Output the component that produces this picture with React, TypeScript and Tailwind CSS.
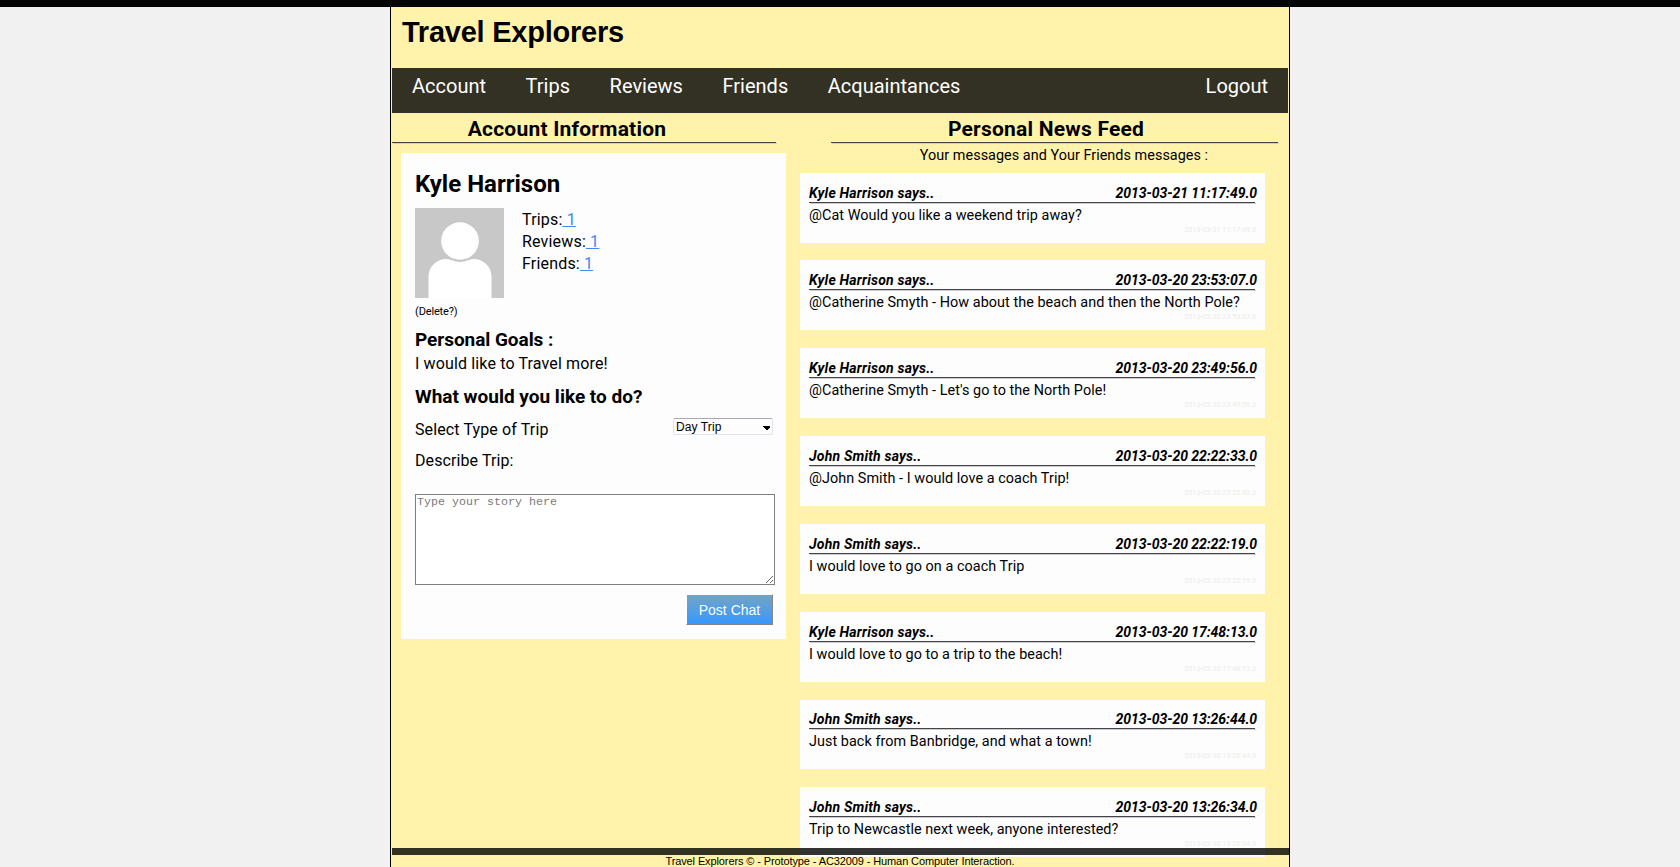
type Message = { author: string; date: string; text: string };

const MESSAGES: Message[] = [
  { author: 'Kyle Harrison', date: '2013-03-21 11:17:49.0', text: '@Cat Would you like a weekend trip away?' },
  { author: 'Kyle Harrison', date: '2013-03-20 23:53:07.0', text: '@Catherine Smyth - How about the beach and then the North Pole?' },
  { author: 'Kyle Harrison', date: '2013-03-20 23:49:56.0', text: "@Catherine Smyth - Let's go to the North Pole!" },
  { author: 'John Smith', date: '2013-03-20 22:22:33.0', text: '@John Smith - I would love a coach Trip!' },
  { author: 'John Smith', date: '2013-03-20 22:22:19.0', text: 'I would love to go on a coach Trip' },
  { author: 'Kyle Harrison', date: '2013-03-20 17:48:13.0', text: 'I would love to go to a trip to the beach!' },
  { author: 'John Smith', date: '2013-03-20 13:26:44.0', text: 'Just back from Banbridge, and what a town!' },
  { author: 'John Smith', date: '2013-03-20 13:26:34.0', text: 'Trip to Newcastle next week, anyone interested?' },
];

const NAV = ['Account', 'Trips', 'Reviews', 'Friends', 'Acquaintances'];
const STATS = ['Trips:', 'Reviews:', 'Friends:'];

function Rule({ className }: { className: string }) {
  return <div className={`h-px bg-[#444448] shadow-[1px_1px_0_#ccccd0] ${className}`} />;
}

function Avatar() {
  return (
    <svg width="89" height="90" viewBox="0 0 89 90" className="block">
      <rect width="89" height="90" fill="#c8c8c8" />
      <path d="M13.5 90V69C13.5 58 22 51 31.500 51C36 51 39 54 45 54C51 54 54 51 58.500 51C68 51 76.500 58 76.500 69V90Z" fill="#fff" />
      <circle cx="45" cy="33" r="20.300" fill="#c8c8c8" />
      <circle cx="45" cy="33" r="18.800" fill="#fff" />
    </svg>
  );
}

function AccountPanel() {
  return (
    <section className="w-[408px] shrink-0">
      <h2 className="mt-1 w-[350px] text-center text-[21px] leading-6 font-bold tracking-[0.22px]">Account Information</h2>
      <Rule className="mt-px w-[384px]" />
      <div className="mt-2.5 ml-[9px] h-[486px] w-[385px] bg-[#fdfdfd] pt-[17px] pl-[14px]">
        <h3 className="text-2xl leading-7 font-bold">Kyle Harrison</h3>
        <div className="mt-2.5 flex gap-[18px]">
          <Avatar />
          <div className="mt-px flex flex-col gap-px text-base leading-[21px] tracking-[0.18px]">
            {STATS.map((s) => (
              <div key={s}>
                {s}
                <a className="whitespace-pre text-[#3b8af8] underline">{' 1'}</a>
              </div>
            ))}
          </div>
        </div>
        <div className="mt-[7px] text-[11px] leading-[13px] tracking-[-0.14px]">(Delete?)</div>
        <h4 className="mt-2.5 text-[19px] leading-[23px] font-bold tracking-[-0.05px]">Personal Goals :</h4>
        <p className="mt-px text-base leading-[23px] tracking-[0.14px]">I would like to Travel more!</p>
        <h4 className="mt-2.5 text-[19px] leading-[23px] font-bold">What would you like to do?</h4>
        <div className="mt-2.5 flex h-[23px] w-[358px] justify-between">
          <span className="text-base leading-[23px] tracking-[0.12px]">Select Type of Trip</span>
          <div className="relative h-[17px] w-[100px]">
            <select className="block h-[17px] w-full appearance-none rounded-[2px] border border-[#dfe3ec] border-t-[#aaa8b2] bg-[#fdfdfd] p-0 pt-[2px] pl-[2px] font-['Liberation_Sans',sans-serif] text-xs leading-[13px] tracking-[0.1px] text-black">
              <option>Day Trip</option>
            </select>
            <svg className="absolute top-[8px] right-[3px]" width="7" height="4" viewBox="0 0 7 4" shapeRendering="crispEdges">
              <path d="M0 0H7V1L4 4H3L0 1Z" fill="#000" />
            </svg>
          </div>
        </div>
        <p className="mt-2 text-base leading-[23px] tracking-[0.1px]">Describe Trip:</p>
        <textarea
          placeholder="Type your story here"
          className="mt-[22px] block h-[91px] w-[360px] border border-[#7f7f7f] bg-white px-px py-0 font-['Liberation_Mono',monospace] text-[11.67px] leading-[14px] placeholder:text-[#7a7a7a]"
        />
        <button className="mt-[9px] ml-[271px] block h-[31px] w-[87px] border border-t-[#fdfdfd] border-r-[#858585] border-b-[#858585] border-l-[#fdfdfd] bg-linear-to-b from-[#71a3c4] to-[#3598ff] bg-clip-padding pt-[2px] font-['Liberation_Sans',sans-serif] text-sm leading-[27px] text-white [text-shadow:0_0_2px_#3598ff]">
          Post Chat
        </button>
      </div>
    </section>
  );
}

function MessageCard({ message }: { message: Message }) {
  return (
    <article className="h-[69.860px] w-[465px] shrink-0 bg-[#fdfdfd] pt-[10.870px] pl-[9px]">
      <header className="flex w-[448px] justify-between text-sm leading-[18px] font-bold italic">
        <span className="tracking-[0.2px]">{message.author} says..</span>
        <span className="tracking-[-0.06px]">{message.date}</span>
      </header>
      <Rule className="w-[446px]" />
      <p className="mt-[3px] text-[14.4px] leading-[19px] tracking-[0.055px]">{message.text}</p>
      <div className="w-[447px] text-right text-[7.2px] leading-[9px] text-[#ececec]">{message.date}</div>
    </article>
  );
}

function NewsFeed() {
  return (
    <section className="flex w-[488px] flex-col">
      <h2 className="mt-1 ml-[31px] w-[430px] text-center text-[21px] leading-6 font-bold tracking-[0.22px]">Personal News Feed</h2>
      <Rule className="mt-px ml-[31px] w-[447px] shrink-0" />
      <p className="mt-[3px] ml-[40px] w-[448px] text-center text-[14.4px] leading-[19px] tracking-[0.04px]">
        Your messages and Your Friends messages :
      </p>
      <div className="mt-[7.650px] flex flex-col gap-[17.960px]">
        {MESSAGES.map((m) => (
          <MessageCard key={m.date} message={m} />
        ))}
      </div>
    </section>
  );
}

export default function App() {
  return (
    <div className="h-[867px] overflow-hidden bg-[#f1f1f1] font-[Roboto,sans-serif] text-black">
      <div className="h-[7px] border-b border-black bg-[#050505]" />
      <div className="relative mx-auto h-[860px] w-[900px] overflow-hidden border-x border-black bg-[#fff3ab] px-px">
        <h1 className="h-[61px] pt-[9px] pl-[10px] font-['Liberation_Sans',sans-serif] text-[29px] leading-8 font-bold tracking-[-0.24px]">
          Travel Explorers
        </h1>
        <nav className="flex h-[45px] items-start gap-[39.600px] bg-[#333124] px-5 pt-1.5 text-xl leading-6 text-white">
          {NAV.map((n) => (
            <a key={n}>{n}</a>
          ))}
          <a className="ml-auto">Logout</a>
        </nav>
        <main className="flex">
          <AccountPanel />
          <NewsFeed />
        </main>
        <footer className="absolute right-0 bottom-0 left-px">
          <div className="h-[7px] bg-black/80" />
          <div className="h-3 pr-px text-center font-['Liberation_Sans',sans-serif] text-[11px] leading-3 tracking-[-0.11px]">
            Travel Explorers © - Prototype - AC32009 - Human Computer Interaction.
          </div>
        </footer>
      </div>
    </div>
  );
}
